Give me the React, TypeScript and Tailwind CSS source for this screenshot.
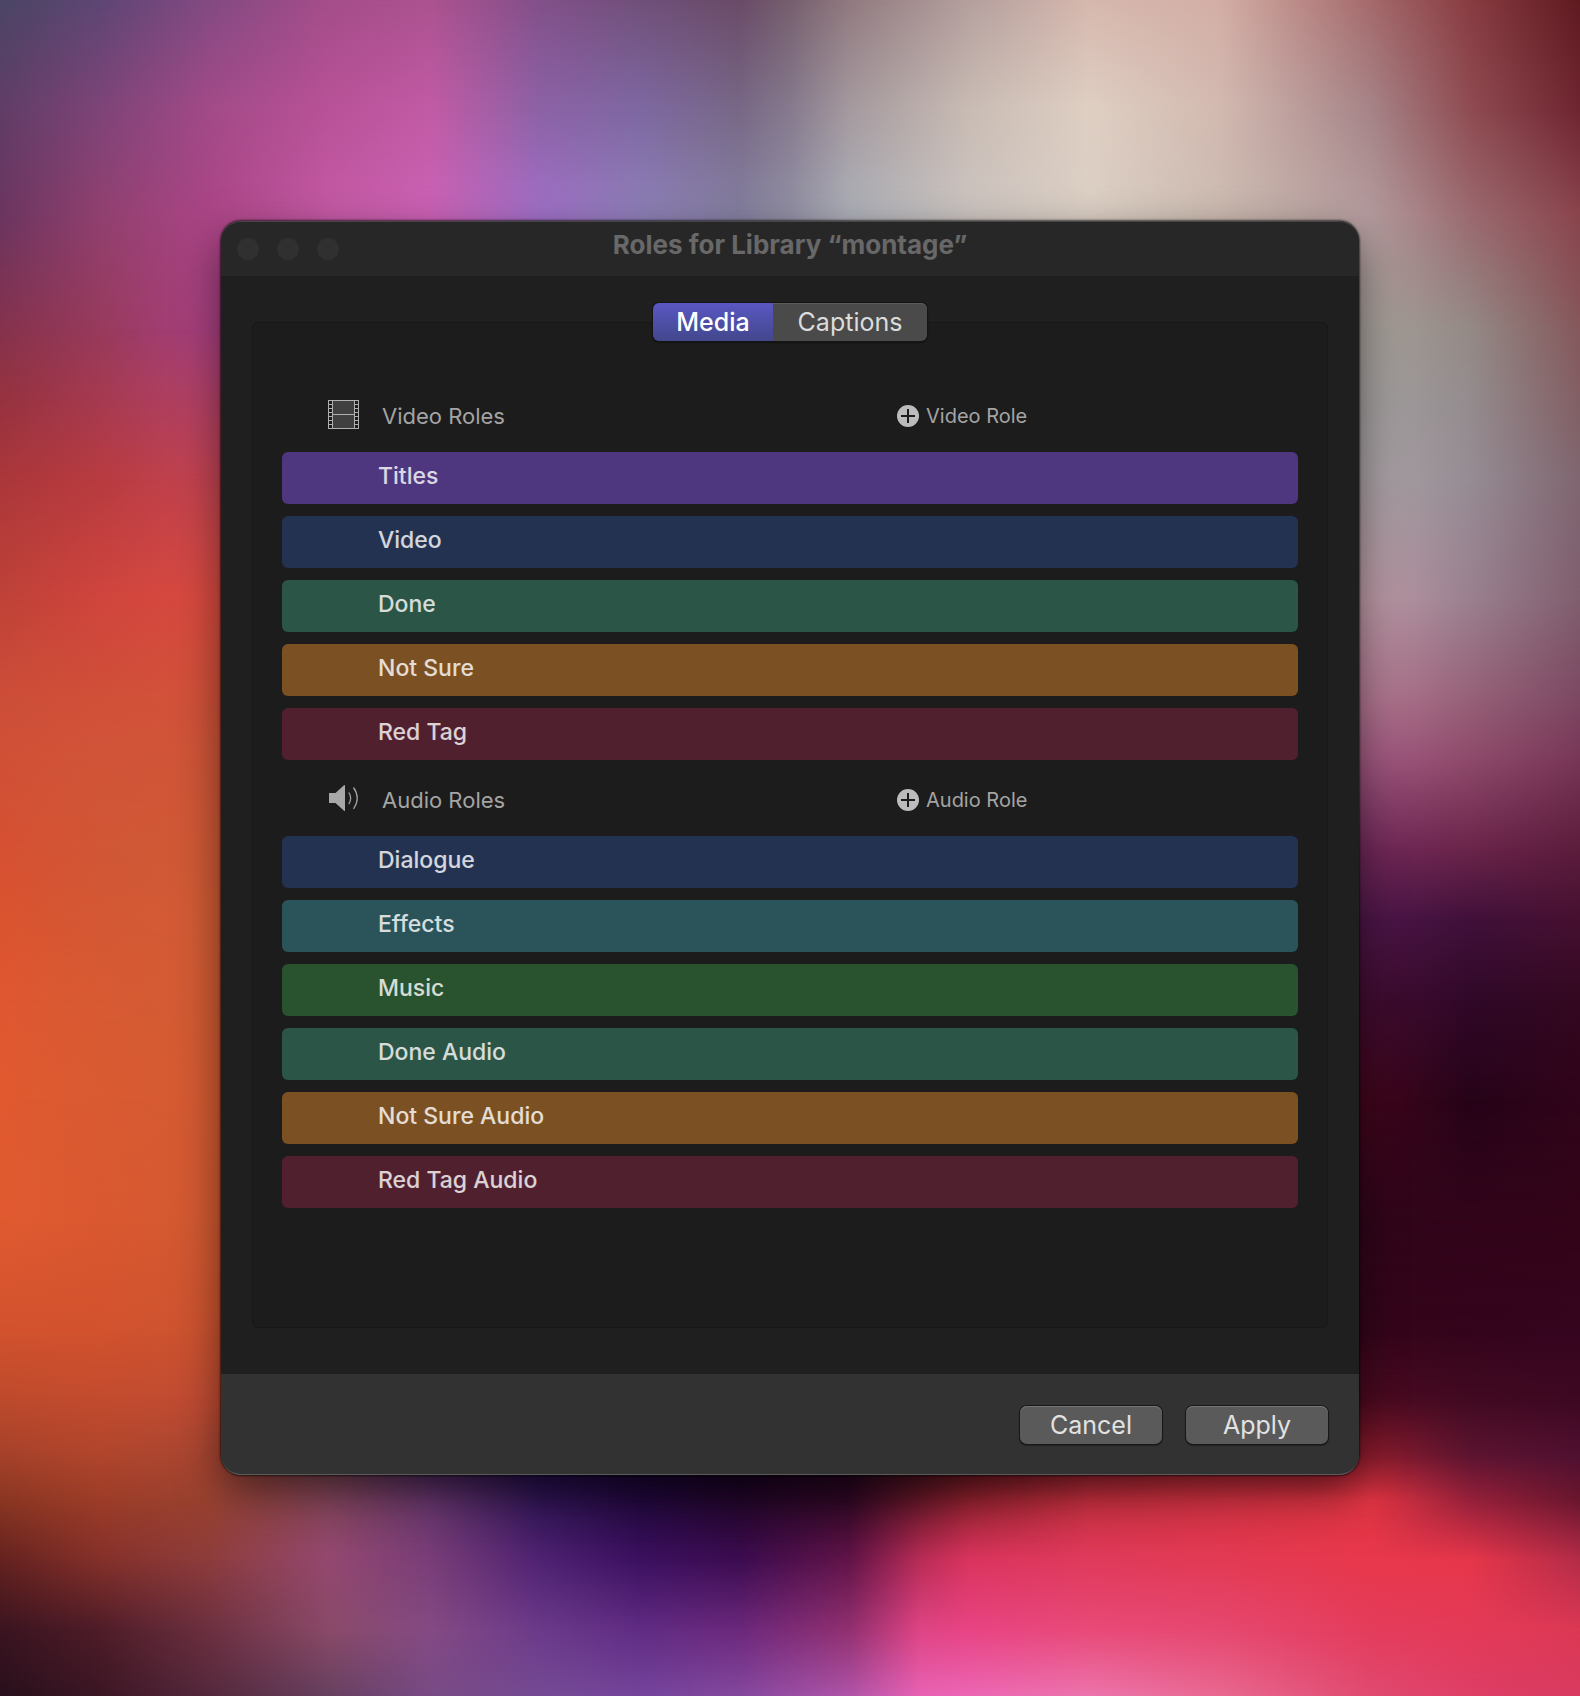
import React, { useState } from "react";

type Row = { y: number; stops: [number, string][] };

const TOP = [0, 100, 210, 330, 430, 540, 640, 740, 790, 850, 970, 1090, 1220, 1370, 1470, 1580];
const BOTTOM = [0, 100, 210, 330, 430, 540, 640, 740, 850, 920, 970, 1090, 1220, 1370, 1470, 1580];
const SIDES = [0, 100, 210, 1370, 1470, 1580];

function row(y: number, xs: number[], colours: string): Row {
  const list = colours.split(" ");
  return { y, stops: xs.map((x, i) => [x, "#" + list[i]]) };
}

const MESH: Row[] = [
  row(0, TOP, "4b4565 5e4674 834a82 a54d8a ac5290 82508a 70507a 6a4b68 765f6e 917a80 b5a09e d6b8ae d3aea6 a56a6c 883c42 5f1a20"),
  row(110, TOP, "603d66 7e4478 a34a88 b95298 c25ba5 8c62a6 7e68a2 786886 867a8e a59a9f c9bcb4 dfcfc3 d2b9b0 a68488 8f4c52 6f2530"),
  row(215, TOP, "6b3560 90406f ab4586 c55aa5 cc62b6 a070c8 8e80b8 8580a0 9290a4 adb0b8 ccc4c0 dbcfc4 cbbab0 b39a9c 9a6a70 8a444c"),
  row(330, SIDES, "85324c 983a5c a84080 a49e98 948a86 85585c"),
  row(400, SIDES, "96323f a63a50 b44268 a29e9e 948c8e 825f64"),
  row(480, SIDES, "ab373a b83b40 c44452 a8a0a4 968c94 7f6670"),
  row(600, SIDES, "bf4238 d0453d d94b40 ba98a4 9a8090 805e6e"),
  row(700, SIDES, "cd4e38 d05038 d2523a b07690 966078 7c4862"),
  row(760, SIDES, "d05036 d15438 d05638 a05880 8e4a6a 783656"),
  row(850, SIDES, "d65032 d15736 d05a36 702858 6a244a 5c1c3c"),
  row(920, SIDES, "db5430 d45834 d25c36 4c1648 40103a 461030"),
  row(1000, SIDES, "df5730 d75a33 d25c34 400c30 300828 330820"),
  row(1100, SIDES, "e0592f d95a31 d45b33 40061c 260318 30041a"),
  row(1220, SIDES, "e05a30 da5830 d25a32 30051a 32041a 330418"),
  row(1330, SIDES, "d2522e d2522e cc5430 34051a 34041c 36051f"),
  row(1400, SIDES, "bd4a2c c24b2e c04c34 4c0a20 420a22 3e0822"),
  row(1455, BOTTOM, "a5412a b0452c a84632 704048 3e2050 1a0840 120428 10021a 1c0418 381018 501018 801c24 902028 8c1c2c 5c1430 501030"),
  row(1500, BOTTOM, "8a3622 9c3c28 9a4230 84455c 64356a 301555 22083e 22062a 300824 681828 93222f c83040 d43242 df3442 96203a 6a162e"),
  row(1560, BOTTOM, "64221f 84302a 8d3c3c 944870 793d78 4f2272 3c1060 3c0c50 621448 b82c56 da345e e03a5c e23a54 e8384c e6364a b42c48"),
  row(1630, BOTTOM, "3a1420 4e1c28 6c3040 8a4a68 844a84 6b3a8a 602c84 6c287c 923070 de4484 e84484 e84a78 e64870 e43c5c e43a58 dc3854"),
  row(1696, BOTTOM, "28101c 3c1624 54283c 664060 784a84 754a94 74449c 84489e b054a8 e862b4 ec66b4 ec74ac e86890 e04a70 de3e66 d83a60"),
];

function Wallpaper() {
  return (
    <svg
      aria-hidden="true"
      className="absolute inset-0 h-full w-full"
      viewBox="0 0 1580 1696"
      preserveAspectRatio="none"
    >
      <defs>
        {MESH.map((r, i) => (
          <linearGradient key={i} id={"hue" + i} gradientUnits="userSpaceOnUse" x1="0" y1="0" x2="1580" y2="0">
            {r.stops.map(([x, c]) => (
              <stop key={x} offset={x / 1580} stopColor={c} />
            ))}
          </linearGradient>
        ))}
        {MESH.slice(1).map((r, i) => (
          <React.Fragment key={i}>
            <linearGradient id={"fade" + (i + 1)} gradientUnits="userSpaceOnUse" x1="0" y1={MESH[i].y} x2="0" y2={r.y}>
              <stop offset="0" stopColor="#fff" stopOpacity="0" />
              <stop offset="1" stopColor="#fff" stopOpacity="1" />
            </linearGradient>
            <mask id={"mask" + (i + 1)} maskUnits="userSpaceOnUse" x="0" y="0" width="1580" height="1696">
              <rect y={MESH[i].y} width="1580" height={1696 - MESH[i].y} fill={`url(#fade${i + 1})`} />
            </mask>
          </React.Fragment>
        ))}
      </defs>
      <rect width="1580" height="1696" fill="url(#hue0)" />
      {MESH.map((_, i) =>
        i === 0 ? null : <rect key={i} width="1580" height="1696" fill={`url(#hue${i})`} mask={`url(#mask${i})`} />
      )}
    </svg>
  );
}

function FilmIcon() {
  const holes = [1, 5, 9, 13, 17, 21, 25];
  return (
    <svg width="31" height="29" viewBox="0 0 31 29" aria-hidden="true" shapeRendering="crispEdges">
      <rect width="31" height="29" fill="#b0b0b0" />
      <rect x="5" y="1" width="21" height="13" fill="#404040" />
      <rect x="5" y="15" width="21" height="13" fill="#404040" />
      {holes.map((y) => (
        <React.Fragment key={y}>
          <rect x="1" y={y} width="3" height="3" fill="#1c1c1c" />
          <rect x="27" y={y} width="3" height="3" fill="#1c1c1c" />
        </React.Fragment>
      ))}
    </svg>
  );
}

function SpeakerIcon() {
  return (
    <svg width="31" height="29" viewBox="0 0 31 29" aria-hidden="true">
      <path d="M1 9.5Q1 9 1.5 9H7.5L16 1.3Q17 .6 17 1.8V26.4Q17 27.4 16 26.7L7.5 19H1.5Q1 19 1 18.5Z" fill="#a8a8a8" />
      <path d="M20.8 8.5Q24.6 14 20.8 20.2" fill="none" stroke="#a0a0a0" strokeWidth="1.3" />
      <path d="M25.5 3.5Q33 14 25.5 25" fill="none" stroke="#a0a0a0" strokeWidth="1.3" />
    </svg>
  );
}

function PlusIcon() {
  return (
    <svg width="22" height="22" viewBox="0 0 22 22" aria-hidden="true">
      <circle cx="11" cy="11" r="11" fill="#bcbcbc" />
      <path d="M11 4V18M4 11H18" stroke="#1c1c1c" strokeWidth="2" />
    </svg>
  );
}

type Role = { name: string; colour: string };

const VIDEO_ROLES: Role[] = [
  { name: "Titles", colour: "bg-[#4e377f]" },
  { name: "Video", colour: "bg-[#223250]" },
  { name: "Done", colour: "bg-[#2b5546]" },
  { name: "Not Sure", colour: "bg-[#7b5022]" },
  { name: "Red Tag", colour: "bg-[#51202f]" },
];

const AUDIO_ROLES: Role[] = [
  { name: "Dialogue", colour: "bg-[#223250]" },
  { name: "Effects", colour: "bg-[#2b545a]" },
  { name: "Music", colour: "bg-[#29522e]" },
  { name: "Done Audio", colour: "bg-[#2b5546]" },
  { name: "Not Sure Audio", colour: "bg-[#7b5022]" },
  { name: "Red Tag Audio", colour: "bg-[#51202f]" },
];

function RoleGroup({ title, add, icon, roles }: { title: string; add: string; icon: React.ReactNode; roles: Role[] }) {
  return (
    <section>
      <div className="grid h-[76px] grid-cols-[615fr_401fr] items-center pt-1">
        <div className="flex items-center pl-[46px]">
          <span className="-mt-1">{icon}</span>
          <h2 className="ml-[23px] text-[22px] leading-7 text-[#a4a4a4]">{title}</h2>
        </div>
        <button type="button" className="flex items-center gap-[7px] justify-self-start text-xl leading-6 text-[#a4a4a4]">
          <PlusIcon />
          {add}
        </button>
      </div>
      <ul className="flex flex-col gap-3">
        {roles.map((r) => (
          <li
            key={r.name}
            className={`flex h-[52px] items-center rounded-md pb-1 pl-24 text-[23px] font-medium leading-7 text-white/80 ${r.colour}`}
          >
            {r.name}
          </li>
        ))}
      </ul>
    </section>
  );
}

const BUTTON =
  "h-[38px] w-[142px] rounded-[7px] bg-[#5a5a5a] text-[25px] leading-8 text-[#e2e2e2] shadow-[inset_0_1px_0_#777,0_0_0_1px_#181818,0_1px_2px_#000]";

export default function App() {
  const [tab, setTab] = useState("Media");
  return (
    <main className="relative flex min-h-screen items-center justify-center overflow-hidden font-['Inter','Liberation_Sans',sans-serif]">
      <Wallpaper />
      <div
        role="dialog"
        aria-labelledby="dialog-title"
        className="relative w-full max-w-[1138px] rounded-[20px] bg-[#1f1f1f] shadow-[0_0_2px_1px_rgba(0,0,0,0.6),0_16px_44px_rgba(0,0,0,0.5)]"
      >
        <header className="grid h-[55px] grid-cols-[1fr_auto_1fr] rounded-t-[20px] border-t border-white/15 bg-[#272727]">
          <div className="flex items-center gap-[18px] pl-4">
            <span className="size-[22px] rounded-full bg-[#303030]" />
            <span className="size-[22px] rounded-full bg-[#303030]" />
            <span className="size-[22px] rounded-full bg-[#303030]" />
          </div>
          <h1 id="dialog-title" className="pt-[7px] text-[26px] font-bold leading-8 text-[#686868]">
            Roles for Library “montage”
          </h1>
        </header>

        <div className="px-[31px] pt-[27px] pb-[46px]">
          <div role="tablist" className="relative mx-auto flex h-[38px] w-fit rounded-md shadow-[0_0_0_1px_#151515,0_1px_2px_#000]">
            {["Media", "Captions"].map((name) => (
              <button
                key={name}
                type="button"
                role="tab"
                aria-selected={tab === name}
                onClick={() => setTab(name)}
                className={`text-[25px] leading-8 first:w-[120px] first:rounded-l-md last:w-[154px] last:rounded-r-md ${
                  tab === name
                    ? "bg-linear-to-b from-[#5a57c4] to-[#42478c] font-medium text-white"
                    : "bg-[#4a4a4a] text-[#dcdcdc] shadow-[inset_0_1px_0_#5c5c5c]"
                }`}
              >
                {name}
              </button>
            ))}
          </div>
          <div className="-mt-[19px] rounded-md border border-[#171717] bg-[#1c1c1c] px-[29px] pt-[53px] pb-[119px]">
            <RoleGroup title="Video Roles" add="Video Role" icon={<FilmIcon />} roles={VIDEO_ROLES} />
            <RoleGroup title="Audio Roles" add="Audio Role" icon={<SpeakerIcon />} roles={AUDIO_ROLES} />
          </div>
        </div>

        <footer className="flex justify-end gap-6 rounded-b-[20px] border-b border-white/20 bg-[#323232] px-[31px] pt-8 pb-[30px]">
          <button type="button" className={BUTTON}>Cancel</button>
          <button type="button" className={BUTTON}>Apply</button>
        </footer>
      </div>
    </main>
  );
}
